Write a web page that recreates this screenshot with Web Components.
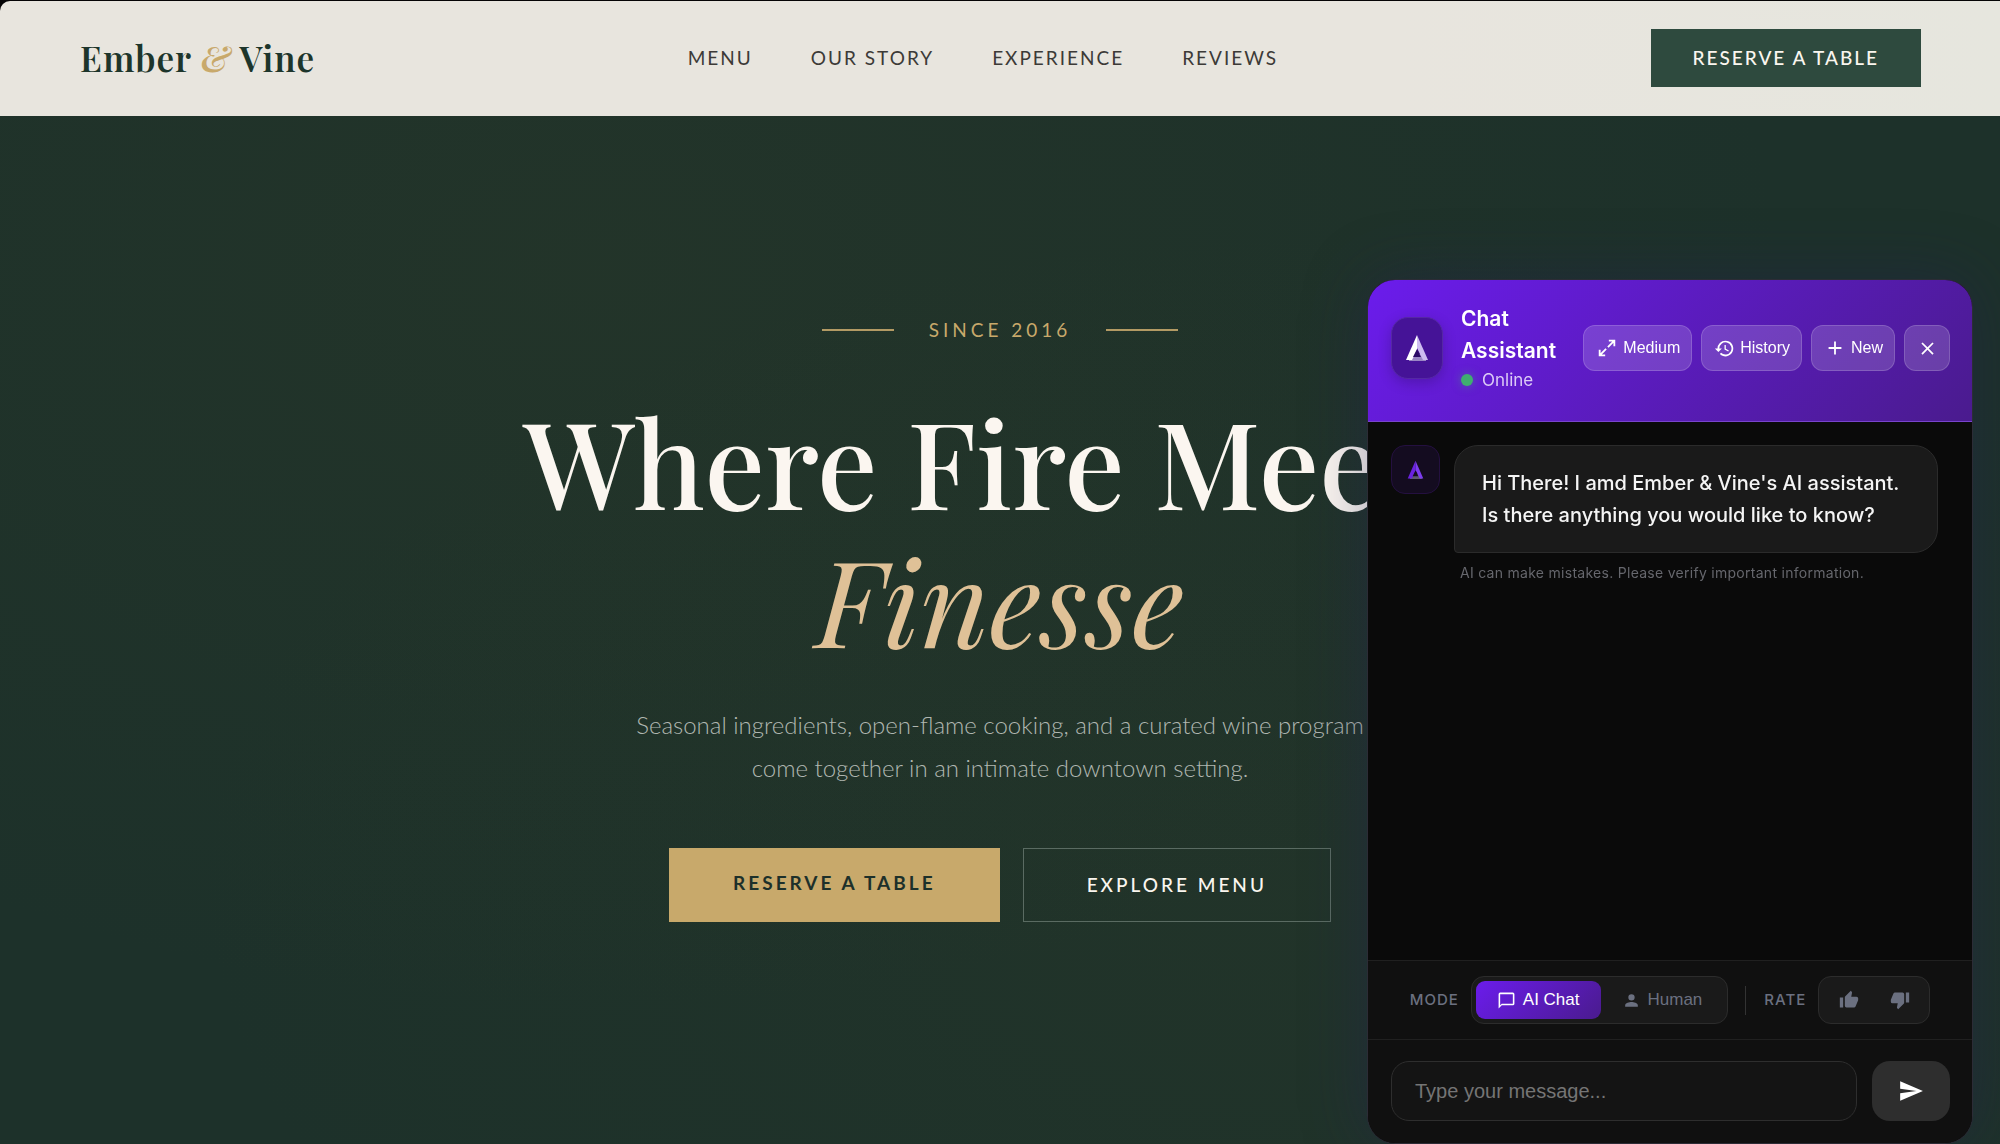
<!DOCTYPE html>
<html lang="en">
<head>
<meta charset="utf-8">
<meta name="viewport" content="width=device-width, initial-scale=1">
<title>Ember &amp; Vine</title>
<style>
    html, body {
        margin: 0;
        background: #050405;
    }
    body {
        display: flex;
        flex-direction: column;
        min-height: 100vh;
        box-sizing: border-box;
        padding-top: 1px;
        font-family: Lato, "Open Sans", sans-serif;
        overflow-x: hidden;
    }
    ev-hero {
        flex: 1;
    }
</style>
</head>
<body>
    <ev-header>
        <a href="#menu">Menu</a>
        <a href="#story">Our Story</a>
        <a href="#experience">Experience</a>
        <a href="#reviews">Reviews</a>
        <ev-button slot="action" variant="small">Reserve a Table</ev-button>
    </ev-header>

    <ev-hero>
        <span slot="eyebrow">Since 2016</span>
        <span slot="title">Where Fire Meets</span>
        <span slot="accent">Finesse</span>
        <span slot="text">Seasonal ingredients, open-flame cooking, and a curated wine program come together in an intimate downtown setting.</span>
        <ev-button slot="actions" variant="gold">Reserve a Table</ev-button>
        <ev-button slot="actions" variant="outline">Explore Menu</ev-button>
    </ev-hero>

    <chat-widget>
        <chat-message>Hi There! I amd Ember &amp; Vine's AI assistant. Is there anything you would like to know?</chat-message>
    </chat-widget>

<script>
class EvButton extends HTMLElement {
    constructor() {
        super();
        this.attachShadow({ mode: 'open' });
        this.shadowRoot.innerHTML = `
        <style>
        :host {
            display: flex;
        }
        button {
            flex: 1;
            box-sizing: border-box;
            border: 0;
            border-radius: 0;
            font-family: Lato, sans-serif;
            font-size: 19px;
            line-height: 24px;
            text-transform: uppercase;
            white-space: nowrap;
            cursor: pointer;
        }
        :host([variant="small"]) button {
            padding: 17px 42px;
            letter-spacing: 2px;
            font-weight: 500;
            background: #2e4a3e;
            color: #faf6ef;
        }
        :host([variant="gold"]) button {
            padding: 23px 64px 27px;
            letter-spacing: 3px;
            font-weight: 700;
            background: #c8a96b;
            color: #1d302a;
        }
        :host([variant="outline"]) button {
            padding: 24px 63px;
            letter-spacing: 3px;
            font-weight: 500;
            background: transparent;
            border: 1px solid #5a6b62;
            color: #faf6ef;
        }
        </style>
        <button type="button"><slot></slot></button>
        `;
    }
}

class EvHeader extends HTMLElement {
    constructor() {
        super();
        this.attachShadow({ mode: 'open' });
        this.shadowRoot.innerHTML = `
        <style>
        :host {
            display: block;
            border-top-left-radius: 10px;
            background: linear-gradient(90deg, #e8e5de 70%, #e6e6de);
        }
        header {
            display: flex;
            justify-content: space-between;
            align-items: center;
            padding: 28px 79px 29px 80px;
        }
        .logo {
            font-family: "Playfair Display", "Liberation Serif", serif;
            font-size: 35px;
            line-height: 44px;
            font-weight: 600;
            letter-spacing: 1px;
            color: #1d352b;
            text-decoration: none;
            white-space: nowrap;
        }
        .logo em {
            color: #c8a96b;
        }
        nav {
            display: flex;
            gap: 58px;
        }
        ::slotted(a) {
            font-size: 19px;
            line-height: 24px;
            letter-spacing: 2px;
            text-transform: uppercase;
            text-decoration: none;
            white-space: nowrap;
            color: #3c3a37;
        }
        </style>
        <header>
            <a class="logo" href="#top">Ember <em>&amp;</em> Vine</a>
            <nav><slot></slot></nav>
            <slot name="action"></slot>
        </header>
        `;
    }
}

class EvHero extends HTMLElement {
    constructor() {
        super();
        this.attachShadow({ mode: 'open' });
        this.shadowRoot.innerHTML = `
        <style>
        :host {
            display: block;
            background:
                radial-gradient(ellipse at 30% 15%, rgba(60, 66, 38, 0.18), transparent 60%),
                radial-gradient(ellipse at 65% 75%, rgba(54, 64, 38, 0.18), transparent 60%),
                #1d312a;
        }
        section {
            display: flex;
            flex-direction: column;
            align-items: center;
            padding: 202px 24px 100px;
            text-align: center;
        }
        .eyebrow {
            display: flex;
            align-items: center;
            gap: 35px;
            font-size: 19px;
            line-height: 24px;
            letter-spacing: 4px;
            text-transform: uppercase;
            color: #c8a96b;
        }
        .eyebrow::before, .eyebrow::after {
            content: "";
            width: 72px;
            height: 2px;
            background: #b39a64;
        }
        h1 {
            margin: 49px 0 36px;
            font-family: "Playfair Display", "Liberation Serif", serif;
            font-size: 120px;
            line-height: 138px;
            font-weight: 500;
            color: #fbf6f0;
        }
        h1 em {
            display: block;
            font-weight: 400;
            color: #dfc197;
        }
        p {
            margin: 0 0 59px;
            max-width: 740px;
            font-size: 24px;
            line-height: 43px;
            font-weight: 300;
            color: #b0b7b1;
        }
        .actions {
            display: flex;
            gap: 23px;
        }
        </style>
        <section>
            <div class="eyebrow"><slot name="eyebrow"></slot></div>
            <h1><slot name="title"></slot><em><slot name="accent"></slot></em></h1>
            <p><slot name="text"></slot></p>
            <div class="actions"><slot name="actions"></slot></div>
        </section>
        `;
    }
}

// Triangular assistant mark, coloured through custom properties
class ChatMark extends HTMLElement {
    constructor() {
        super();
        this.attachShadow({ mode: 'open' });
        this.shadowRoot.innerHTML = `
        <style>
        :host {
            display: block;
            width: 24px;
        }
        svg {
            display: block;
            width: 100%;
        }
        </style>
        <svg viewBox="0 0 24 28" aria-hidden="true">
            <path d="M4 23 9 20H17L21 23V27H4Z" fill="var(--mark-base)"/>
            <path d="M12 1 1 26H7L12 16Z" fill="var(--mark-left)"/>
            <path d="M12 1 23 26H18L12 14Z" fill="var(--mark-right)"/>
            <path d="M12 15 16 23H8Z" fill="var(--mark-hole)"/>
        </svg>
        `;
    }
}

class ChatMessage extends HTMLElement {
    constructor() {
        super();
        this.attachShadow({ mode: 'open' });
        this.shadowRoot.innerHTML = `
        <style>
        :host {
            display: grid;
            grid-template-columns: 49px 1fr;
            column-gap: 14px;
            align-items: start;
        }
        .avatar {
            box-sizing: border-box;
            height: 49px;
            display: grid;
            place-items: center;
            border: 1px solid #241040;
            border-radius: 14px;
            background: #140c20;
        }
        chat-mark {
            width: 17px;
            --mark-left: #6a22e0;
            --mark-right: #7d3cf0;
            --mark-base: #5d5870;
            --mark-hole: #140c20;
        }
        .bubble {
            padding: 21px 27px;
            border: 1px solid #2b2b2b;
            border-radius: 24px 24px 24px 4px;
            background: #1a1a1a;
            font-size: 20px;
            line-height: 32px;
            font-weight: 500;
            color: #f5f5f5;
        }
        small {
            grid-column: 2;
            margin: 9px 6px 0;
            font-size: 14px;
            line-height: 22px;
            letter-spacing: 0.02em;
            color: #66676d;
        }
        </style>
        <div class="avatar"><chat-mark></chat-mark></div>
        <div class="bubble"><slot></slot></div>
        <small>AI can make mistakes. Please verify important information.</small>
        `;
    }
}

class ChatWidget extends HTMLElement {
    constructor() {
        super();
        this.attachShadow({ mode: 'open' });
        this.shadowRoot.innerHTML = `
        <style>
        :host {
            position: fixed;
            right: 27px;
            bottom: 0;
            z-index: 10;
            display: flex;
            flex-direction: column;
            box-sizing: border-box;
            width: 606px;
            max-width: calc(100vw - 54px);
            height: 865px;
            max-height: 100vh;
            overflow: hidden;
            border: 1px solid #2c2c36;
            border-radius: 28px;
            background: #0a0a0a;
            box-shadow: 0 0 64px rgba(36, 32, 84, 0.4);
            font-family: Inter, "Liberation Sans", sans-serif;
        }
        button, input {
            font-family: "Liberation Sans", Arial, sans-serif;
        }
        button {
            margin: 0;
            padding: 0;
            cursor: pointer;
        }
        svg {
            flex: none;
            display: block;
        }
        header {
            display: flex;
            align-items: center;
            padding: 23px 22px 28px 23px;
            border-bottom: 1px solid #7844cc;
            background: linear-gradient(135deg, #6b1cec, #4a1b8e);
        }
        .badge {
            box-sizing: border-box;
            flex: none;
            width: 52px;
            height: 62px;
            display: grid;
            place-items: center;
            margin-right: 18px;
            border: 1px solid #5528a4;
            border-radius: 17px;
            background: #451397;
            box-shadow: 0 4px 14px rgba(0, 0, 0, 0.2);
            --mark-left: #ffffff;
            --mark-right: #cdbcf0;
            --mark-base: #9a86c4;
            --mark-hole: #2c0b66;
        }
        .who {
            flex: 1;
            min-width: 0;
        }
        h2 {
            margin: 0;
            font-size: 21px;
            line-height: 32px;
            font-weight: 600;
            color: #ffffff;
        }
        .status {
            display: flex;
            align-items: center;
            gap: 9px;
            font-size: 17px;
            line-height: 26px;
            color: #dccbf6;
        }
        .status::before {
            content: "";
            width: 12px;
            height: 12px;
            border-radius: 50%;
            background: #3fae70;
            box-shadow: 0 0 10px rgba(63, 174, 112, 0.5);
        }
        .tools {
            display: flex;
            gap: 9px;
        }
        .tools button {
            display: flex;
            align-items: center;
            gap: 5px;
            height: 46px;
            padding: 0 11px 0 12px;
            border: 1px solid rgba(255, 255, 255, 0.16);
            border-radius: 12px;
            background: rgba(255, 255, 255, 0.16);
            font-size: 16px;
            font-weight: 500;
            color: #ffffff;
        }
        .log {
            flex: 1;
            padding: 23px 34px 23px 23px;
            overflow: hidden;
        }
        .options {
            display: flex;
            align-items: center;
            justify-content: center;
            padding: 15px 0;
            border-top: 1px solid #202020;
            background: #101010;
            color: #6b7080;
        }
        .label {
            font-size: 15px;
            line-height: 24px;
            font-weight: 500;
            letter-spacing: 1px;
        }
        .group {
            box-sizing: border-box;
            display: flex;
            height: 48px;
            padding: 4px;
            border: 1px solid #2c2c2c;
            border-radius: 13px;
            background: #1a1a1a;
        }
        .group button {
            display: flex;
            align-items: center;
            justify-content: center;
            border: 0;
            border-radius: 9px;
            background: transparent;
            font-size: 17px;
            color: #6b7080;
        }
        .mode {
            margin: 0 17px 0 12px;
        }
        .mode button {
            gap: 7px;
            padding: 0 21px;
        }
        .mode button[aria-pressed="true"] {
            background: linear-gradient(135deg, #6b1cec, #4a1b8e);
            color: #ffffff;
        }
        .rule {
            width: 1px;
            height: 29px;
            margin-right: 18px;
            background: #333333;
        }
        .rate {
            margin-left: 12px;
        }
        .rate button {
            width: 51px;
        }
        form {
            display: flex;
            gap: 15px;
            padding: 21px 22px 22px 23px;
            border-top: 1px solid #202020;
            background: #101010;
        }
        input {
            flex: 1;
            min-width: 0;
            box-sizing: border-box;
            height: 60px;
            padding: 0 23px;
            border: 1px solid #2e2e2e;
            border-radius: 18px;
            background: #141414;
            font-size: 20px;
            color: #f5f5f5;
        }
        input::placeholder {
            color: #757575;
            opacity: 1;
        }
        .send {
            width: 78px;
            height: 60px;
            display: grid;
            place-items: center;
            border: 0;
            border-radius: 18px;
            background: #2e2e2e;
            color: #ffffff;
        }
        </style>
        <header>
            <div class="badge"><chat-mark></chat-mark></div>
            <div class="who">
                <h2>Chat Assistant</h2>
                <div class="status">Online</div>
            </div>
            <div class="tools">
                <button type="button">
                    <svg width="22" height="22" viewBox="0 0 24 24" fill="none" stroke="currentColor" stroke-width="2"><path d="M14 4h6v6M20 4l-7 7M10 20H4v-6M4 20l7-7"/></svg>
                    Medium
                </button>
                <button type="button">
                    <svg width="21" height="21" viewBox="0 0 24 24" fill="currentColor"><path d="M13 3a9 9 0 0 0-9 9H1l4 4 4-4H6a7 7 0 1 1 2.060 4.940l-1.420 1.420A9 9 0 1 0 13 3zm-1 5v5l4.280 2.540.720-1.210-3.500-2.080V8z"/></svg>
                    History
                </button>
                <button type="button">
                    <svg width="22" height="22" viewBox="0 0 24 24" fill="currentColor"><path d="M19 13h-6v6h-2v-6H5v-2h6V5h2v6h6z"/></svg>
                    New
                </button>
                <button type="button" aria-label="Close">
                    <svg width="21" height="21" viewBox="0 0 24 24" fill="currentColor"><path d="M19 6.410 17.590 5 12 10.590 6.410 5 5 6.410 10.590 12 5 17.590 6.410 19 12 13.410 17.590 19 19 17.590 13.410 12z"/></svg>
                </button>
            </div>
        </header>
        <div class="log"><slot></slot></div>
        <div class="options">
            <span class="label" id="mode">MODE</span>
            <div class="group mode" role="group" aria-labelledby="mode">
                <button type="button" aria-pressed="true">
                    <svg width="19" height="19" viewBox="0 0 24 24" fill="currentColor"><path d="M20 2H4a2 2 0 0 0-2 2v18l4-4h14a2 2 0 0 0 2-2V4a2 2 0 0 0-2-2zm0 14H6l-2 2V4h16z"/></svg>
                    AI Chat
                </button>
                <button type="button" aria-pressed="false">
                    <svg width="19" height="19" viewBox="0 0 24 24" fill="currentColor"><path d="M12 12a4 4 0 1 0 0-8 4 4 0 0 0 0 8zm0 2c-2.670 0-8 1.340-8 4v2h16v-2c0-2.660-5.330-4-8-4z"/></svg>
                    Human
                </button>
            </div>
            <span class="rule"></span>
            <span class="label" id="rate">RATE</span>
            <div class="group rate" role="group" aria-labelledby="rate">
                <button type="button" aria-label="Good answer">
                    <svg width="20" height="20" viewBox="0 0 24 24" fill="currentColor"><path d="M1 21h4V9H1zm22-11a2 2 0 0 0-2-2h-6.310l.950-4.570.030-.320c0-.410-.170-.790-.440-1.060L14.170 1 7.590 7.590C7.220 7.950 7 8.450 7 9v10a2 2 0 0 0 2 2h9c.830 0 1.540-.500 1.840-1.220l3.020-7.050c.090-.230.140-.470.140-.730z"/></svg>
                </button>
                <button type="button" aria-label="Bad answer">
                    <svg width="20" height="20" viewBox="0 0 24 24" fill="currentColor"><path d="M15 3H6c-.830 0-1.540.500-1.840 1.220l-3.020 7.050c-.090.230-.140.470-.140.730v2a2 2 0 0 0 2 2h6.310l-.950 4.570-.030.320c0 .410.170.790.440 1.060L9.830 23l6.590-6.590c.360-.360.580-.860.580-1.410V5a2 2 0 0 0-2-2zm4 0v12h4V3z"/></svg>
                </button>
            </div>
        </div>
        <form>
            <input type="text" placeholder="Type your message..." aria-label="Message">
            <button class="send" type="submit" aria-label="Send">
                <svg width="26" height="26" viewBox="0 0 24 24" fill="currentColor"><path d="M2 21 23 12 2 3v7l15 2-15 2z"/></svg>
            </button>
        </form>
        `;
    }

    connectedCallback() {
        this.shadowRoot.querySelector('form').addEventListener('submit', this.handleSubmit);
    }

    handleSubmit(event) {
        event.preventDefault();
    }
}

customElements.define('ev-button', EvButton);
customElements.define('ev-header', EvHeader);
customElements.define('ev-hero', EvHero);
customElements.define('chat-mark', ChatMark);
customElements.define('chat-message', ChatMessage);
customElements.define('chat-widget', ChatWidget);
</script>
</body>
</html>
